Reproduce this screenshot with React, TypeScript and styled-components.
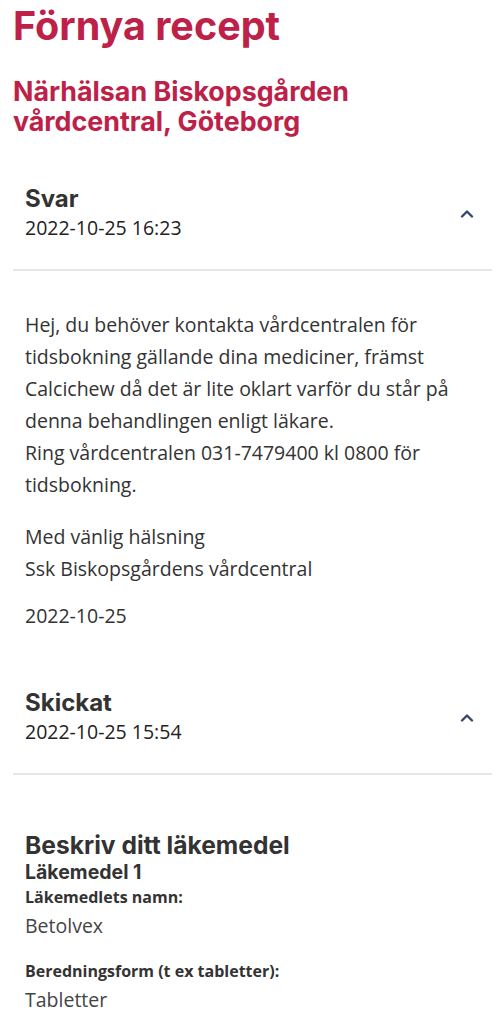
import styled, { createGlobalStyle } from 'styled-components';

const GlobalStyle = createGlobalStyle`
  body {
    margin: 0;
    background: #fff;
    font-family: 'Open Sans', 'Liberation Sans', sans-serif;
  }
`;

const Page = styled.main`
  padding: 3px 12px 0 13px;
`;

const Title = styled.h1`
  margin: 0;
  font-family: 'Inter', 'Liberation Sans', sans-serif;
  font-size: 39.5px;
  line-height: 46px;
  font-weight: 700;
  color: #bd2148;
`;

const Clinic = styled.h2`
  margin: 27px 0 24px 0;
  font-family: 'Inter', 'Liberation Sans', sans-serif;
  font-size: 26.8px;
  line-height: 30px;
  font-weight: 700;
  color: #bd2148;
`;

const Header = styled.div`
  display: flex;
  align-items: center;
  justify-content: space-between;
  padding: 24px 12px 27px 12px;
  border-bottom: 2px solid #e6e6e6;
`;

const HeaderText = styled.div`
  display: flex;
  flex-direction: column;
`;

const HeaderTitle = styled.div`
  font-family: 'Inter', 'Liberation Sans', sans-serif;
  font-size: 24px;
  line-height: 30px;
  font-weight: 700;
  color: #333;
`;

const HeaderDate = styled.div`
  font-size: 19.5px;
  line-height: 28px;
  color: #222;
`;

const Chevron = styled.svg`
  width: 14px;
  height: 9px;
  margin-right: 6px;
`;

const Panel = styled.div<{ $top: number; $bottom: number }>`
  padding: ${(p) => p.$top}px 12px ${(p) => p.$bottom}px 12px;
  color: #333;
  font-size: 19.5px;
  line-height: 32px;
`;

const Para = styled.p<{ $gap?: number }>`
  margin: ${(p) => p.$gap ?? 0}px 0 0 0;
`;

const PanelTitle = styled.div`
  font-family: 'Inter', 'Liberation Sans', sans-serif;
  font-size: 24.6px;
  line-height: 30px;
  font-weight: 700;
  color: #333;
`;

const SubTitle = styled.div`
  margin-bottom: 1px;
  font-family: 'Inter', 'Liberation Sans', sans-serif;
  font-size: 19.5px;
  line-height: 24px;
  font-weight: 700;
  color: #333;
`;

const Field = styled.div`
  & + & {
    margin-top: 17px;
  }
`;

const Label = styled.div`
  font-size: 16px;
  line-height: 24px;
  font-weight: 700;
  color: #333;
`;

const Value = styled.div`
  margin-top: 1px;
  font-size: 19.5px;
  line-height: 32px;
  color: #444;
`;

function SectionHeader({ title, date }: { title: string; date: string }) {
  return (
    <Header>
      <HeaderText>
        <HeaderTitle>{title}</HeaderTitle>
        <HeaderDate>{date}</HeaderDate>
      </HeaderText>
      <Chevron viewBox="0 0 14 9" aria-hidden>
        <polyline
          points="2,7.5 7,2.5 12,7.5"
          fill="none"
          stroke="#34476b"
          strokeWidth="2.4"
          strokeLinecap="round"
          strokeLinejoin="round"
        />
      </Chevron>
    </Header>
  );
}

export default function App() {
  return (
    <>
      <GlobalStyle />
      <Page>
        <Title>Förnya recept</Title>
        <Clinic>
          Närhälsan Biskopsgården
          <br />
          vårdcentral, Göteborg
        </Clinic>

        <SectionHeader title="Svar" date="2022-10-25 16:23" />
        <Panel $top={38} $bottom={32}>
          <Para>
            Hej, du behöver kontakta vårdcentralen för tidsbokning gällande
            dina mediciner, främst Calcichew då det är lite oklart varför du
            står på denna behandlingen enligt läkare.
            <br />
            Ring vårdcentralen 031-7479400 kl 0800 för tidsbokning.
          </Para>
          <Para $gap={20}>
            Med vänlig hälsning
            <br />
            Ssk Biskopsgårdens vårdcentral
          </Para>
          <Para $gap={15}>2022-10-25</Para>
        </Panel>

        <SectionHeader title="Skickat" date="2022-10-25 15:54" />
        <Panel $top={55} $bottom={20}>
          <PanelTitle>Beskriv ditt läkemedel</PanelTitle>
          <SubTitle>Läkemedel 1</SubTitle>
          <Field>
            <Label>Läkemedlets namn:</Label>
            <Value>Betolvex</Value>
          </Field>
          <Field>
            <Label>Beredningsform (t ex tabletter):</Label>
            <Value>Tabletter</Value>
          </Field>
        </Panel>
      </Page>
    </>
  );
}
